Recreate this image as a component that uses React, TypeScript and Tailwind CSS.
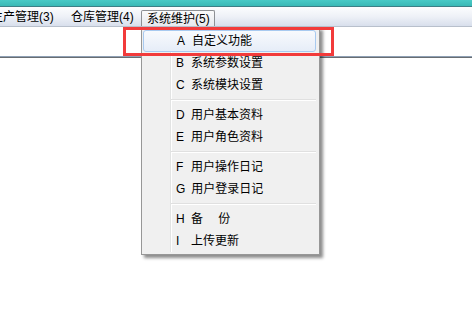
import React from "react";

type Item = { key: string; label: string; active?: boolean };

const groups: Item[][] = [
  [
    { key: "A", label: "自定义功能", active: true },
    { key: "B", label: "系统参数设置" },
    { key: "C", label: "系统模块设置" },
  ],
  [
    { key: "D", label: "用户基本资料" },
    { key: "E", label: "用户角色资料" },
  ],
  [
    { key: "F", label: "用户操作日记" },
    { key: "G", label: "用户登录日记" },
  ],
  [
    { key: "H", label: "备　 份" },
    { key: "I", label: "上传更新" },
  ],
];

const font = { fontFamily: '"Liberation Sans", "Noto Sans CJK SC", sans-serif' };

export default function App() {
  return (
    <div
      className="relative w-[472px] h-[317px] overflow-hidden bg-white text-[12px] text-black"
      style={font}
    >
      {/* title strip */}
      <div className="h-[6px] bg-gradient-to-b from-[#49cac6] to-[#3ab9b6]" />
      <div className="h-[1px] bg-[#3d7f86]" />
      {/* menubar */}
      <div className="flex h-[20px] items-stretch border-b border-[#b8c0cc] bg-gradient-to-b from-[#fcfdfe] via-[#eef1f7] to-[#d8dfec]">
        <div className="w-[75px] -ml-[15px] pl-[6px] flex items-center whitespace-nowrap">生产管理(3)</div>
        <div className="w-[81px] pl-[11px] flex items-center whitespace-nowrap">仓库管理(4)</div>
        <div className="mt-[3px] w-[74px] pl-[5px] flex items-center whitespace-nowrap rounded-t-[2px] border border-b-0 border-[#8d9094] bg-gradient-to-b from-[#fbfbfb] to-[#e6e9ee]">
          系统维护(5)
        </div>
      </div>
      {/* content area */}
      <div className="h-[29px] bg-white" />
      <div className="h-[1px] bg-[#8fa0b4]" />
      <div className="h-[1px] bg-[#686d72]" />
      <div className="h-[259px] bg-white" />

      {/* dropdown menu */}
      <div className="absolute left-[141px] top-[27px] w-[179px] border border-[#979797] bg-[#f0f0f0] pl-[1px] pr-[3px] py-[2px] shadow-[3px_3px_3px_rgba(0,0,0,0.45)]">
        <div className="absolute left-[28px] top-[2px] bottom-[2px] w-[1px] bg-[#e2e3e3]" />
        <div className="absolute left-[29px] top-[2px] bottom-[2px] w-[1px] bg-white" />
        {groups.map((g, gi) => (
          <div key={gi}>
            {gi > 0 && (
              <div className="relative h-[8px] flex flex-col justify-center pl-[28px]">
                <div className="h-[1px] bg-[#e0e0e0]" />
                <div className="h-[1px] bg-white" />
              </div>
            )}
            {g.map((it) => (
              <div
                key={it.key}
                className={
                  "relative h-[22px] flex items-center pl-[33px] whitespace-pre " +
                  (it.active
                    ? "rounded-[3px] border border-[#a8caf0] bg-gradient-to-b from-[#f8fafd] to-[#e6edf8] pl-[32px]"
                    : "")
                }
              >
                <span className="inline-block min-w-[9px]">{it.key}</span>
                <span className="ml-[6px]">{it.label}</span>
              </div>
            ))}
          </div>
        ))}
      </div>

      {/* red annotation box */}
      <div className="absolute left-[123px] top-[27px] w-[211px] h-[29px] border-[3px] border-[#f23b3b]" />
    </div>
  );
}
